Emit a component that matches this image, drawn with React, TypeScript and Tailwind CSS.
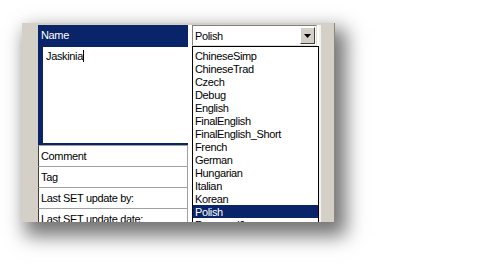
const languages = [
  "ChineseSimp",
  "ChineseTrad",
  "Czech",
  "Debug",
  "English",
  "FinalEnglish",
  "FinalEnglish_Short",
  "French",
  "German",
  "Hungarian",
  "Italian",
  "Korean",
  "Polish",
  "Reserved0",
];

const rows = ["Comment", "Tag", "Last SET update by:", "Last SET update date:"];

export default function App() {
  return (
    <div className="w-[479px] h-[266px] bg-white pt-[23px] pl-[22px] overflow-hidden font-['Liberation_Sans',Arial,sans-serif] text-[11px] tracking-[-0.35px] text-black">
      <div className="w-[313px] h-[199px] bg-[#d4d0c8] border-r border-[#8a8780] overflow-hidden flex pl-[16px] pt-[2px] shadow-[7px_10px_18px_4px_rgba(0,0,0,0.55)]">
        {/* property names */}
        <div className="w-[150px] shrink-0 flex flex-col bg-white">
          <div className="h-[21px] shrink-0 bg-[#0a246a] text-white flex items-center pl-[3px]">Name</div>
          <div className="h-[99px] shrink-0 bg-white border-l-[5px] border-t border-b-2 border-[#0a246a] pl-[3px] pt-[3px] leading-[13px]">
            Jaskinia<span className="inline-block w-px h-[12px] bg-black align-[-2px]" />
          </div>
          {rows.map((r) => (
            <div key={r} className="h-[21px] shrink-0 border-t border-l border-r border-[#a0a0a0] border-l-[#404040] flex items-center pl-[2px] pt-px">
              {r}
            </div>
          ))}
        </div>

        {/* value column */}
        <div className="w-[4px] shrink-0 bg-white" />
        <div className="w-[127px] shrink-0 flex flex-col bg-white">
          <div className="h-[21px] shrink-0 w-[125px] border border-[#808080] border-r-[#e0ddd6] border-b-[#e0ddd6] flex items-center justify-between pl-[2px] pr-px">
            <span className="pt-px">Polish</span>
            <div className="w-[15px] h-[17px] bg-[#d4d0c8] border border-white border-r-[#404040] border-b-[#404040] flex items-center justify-center">
              <svg width="7" height="4" viewBox="0 0 7 4">
                <path d="M0 0h7L3.5 4z" fill="#000" />
              </svg>
            </div>
          </div>
          <div className="h-[200px] shrink-0 border border-black pt-[2px] overflow-hidden">
            {languages.map((l) => (
              <div
                key={l}
                className={`h-[13px] leading-[14px] pl-[2px] ${l === "Polish" ? "bg-[#0a246a] text-white" : ""}`}
              >
                {l}
              </div>
            ))}
          </div>
        </div>
        <div className="w-[2px] shrink-0 bg-[#f4f2ee]" />
      </div>
    </div>
  );
}
